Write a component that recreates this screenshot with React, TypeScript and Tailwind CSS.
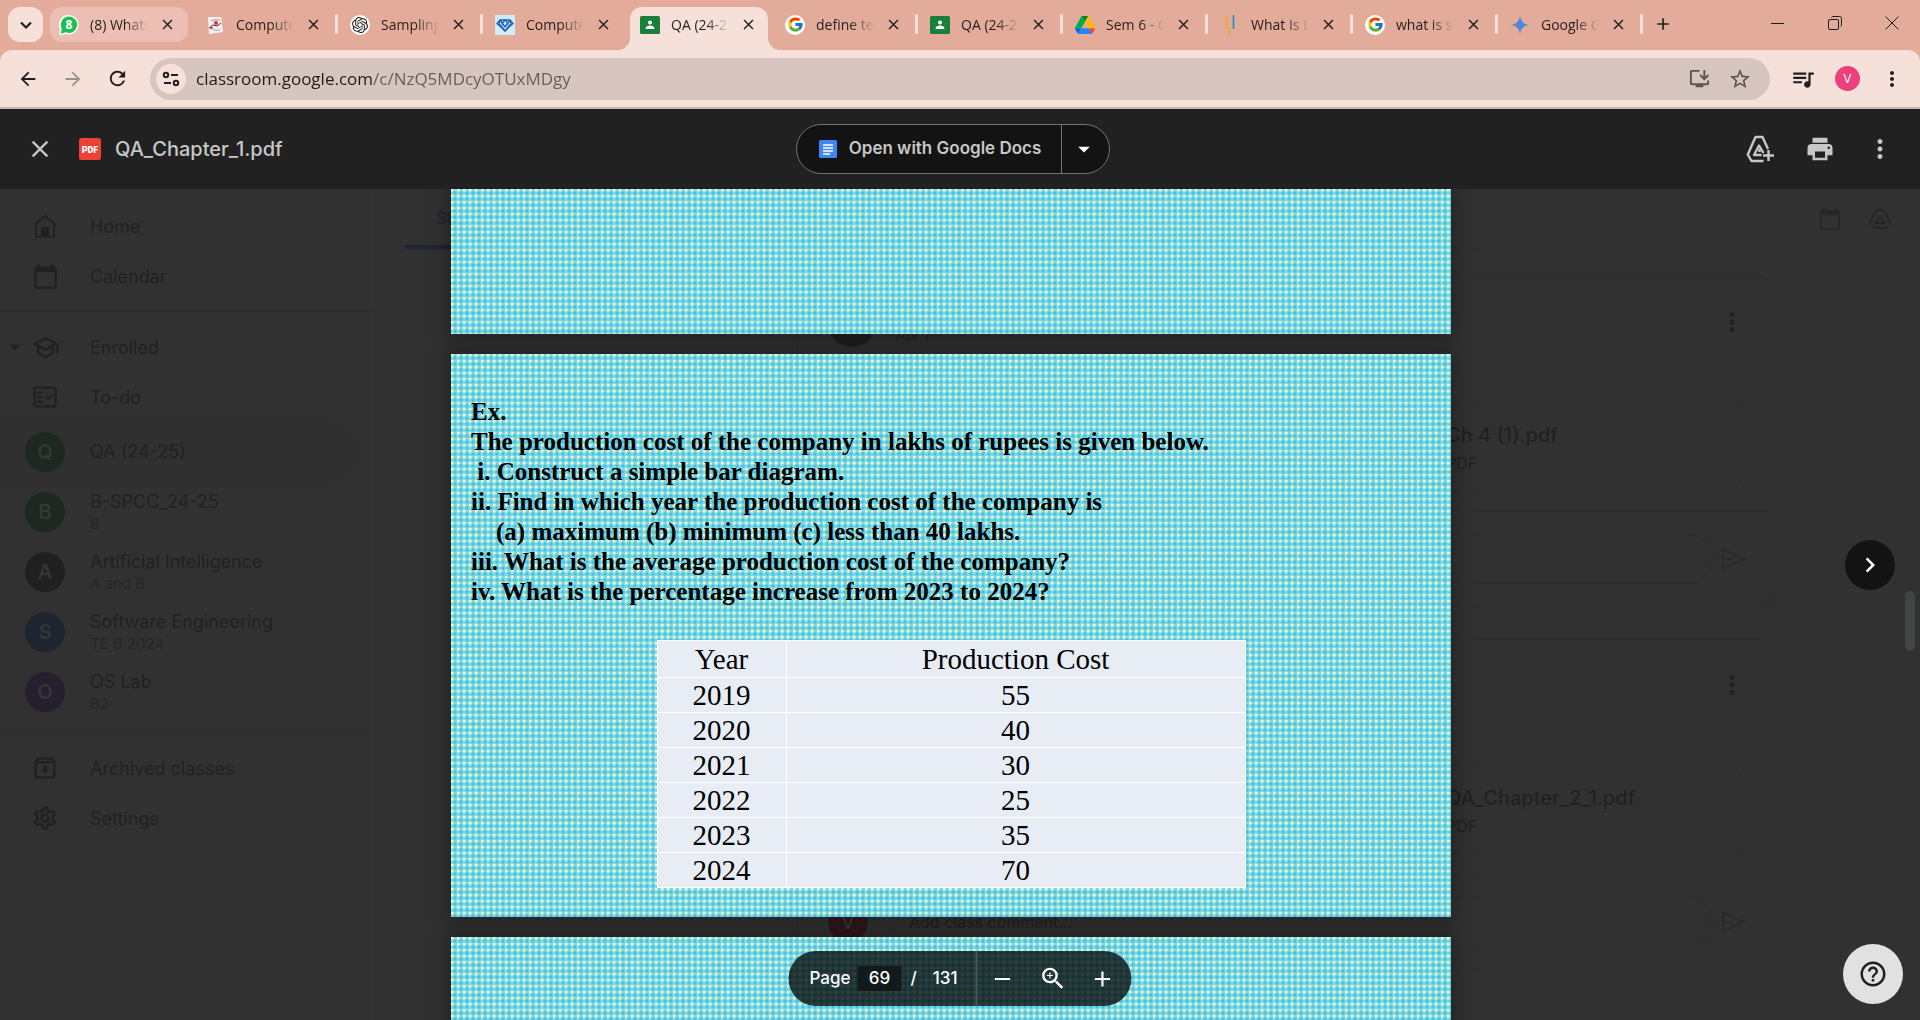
import type { ReactNode } from "react";
import {
  MdAdd,
  MdArrowBack,
  MdArrowDropDown,
  MdArrowForward,
  MdCalendarToday,
  MdChevronRight,
  MdClose,
  MdHelpOutline,
  MdMoreVert,
  MdOutlineArchive,
  MdOutlineFactCheck,
  MdOutlineInstallDesktop,
  MdOutlineSchool,
  MdOutlineSettings,
  MdPrint,
  MdQueueMusic,
  MdRefresh,
  MdRemove,
  MdStarBorder,
  MdZoomIn,
} from "react-icons/md";
import { FcGoogle } from "react-icons/fc";
import { SiOpenai } from "react-icons/si";

const paper =
  "bg-[#7fd9de] bg-[image:radial-gradient(circle_at_1px_1px,#f4fbd2_1px,transparent_2px),radial-gradient(circle_at_4px_4px,#3fc0ee_1px,transparent_2px)] bg-[size:6px_6px] shadow-[0_0_20px_4px_rgba(0,0,0,0.3)]";

/* ---------- favicons ---------- */

function WhatsAppIcon() {
  return (
    <svg viewBox="0 0 20 24" className="h-6 w-5" aria-hidden="true">
      <path d="M10 2a9.6 9.6 0 0 0-9 14L.4 22.500 7 21a9.700 9.700 0 1 0 3-19z" fill="#fff" />
      <path d="M10 3.500a8.200 8.200 0 0 0-7.300 12L1.900 20.800l5-1.500A8.200 8.200 0 1 0 10 3.500z" fill="#1fbf55" />
      <text x="10" y="16" textAnchor="middle" fontSize="12" fontWeight="700" fill="#fff" fontFamily="Open Sans, sans-serif">8</text>
    </svg>
  );
}

function BookIcon() {
  return (
    <svg viewBox="0 0 20 20" className="size-5" aria-hidden="true">
      <path d="M2 3l14-2 2 16-14 2z" fill="#e9a9a4" />
      <path d="M3 2h13l2 15-14 2z" fill="#f5f1f1" />
      <path d="M6 6l4-1.500 5 .5" stroke="#b8b5b8" strokeWidth="1.500" fill="none" />
      <circle cx="11" cy="8" r="2" fill="#e02f32" />
      <path d="M4 13l4-3 4 1 4-3" stroke="#3c3c48" strokeWidth="1" fill="none" />
      <circle cx="6.500" cy="13" r="1.300" fill="#e02f32" />
      <path d="M8 15h7" stroke="#a9a5a8" />
    </svg>
  );
}

function ChatIcon() {
  return (
    <span className="flex size-5 items-center justify-center rounded-full bg-white text-[#222]">
      <SiOpenai size={16} />
    </span>
  );
}

function DiamondIcon() {
  return (
    <svg viewBox="0 0 20 20" className="size-5" aria-hidden="true">
      <path d="M0 0h20v20H0z" fill="#d3ebf5" />
      <g fill="none" stroke="#1c62b8" strokeWidth="1.300" strokeLinejoin="round">
        <path d="M5 5h10l3 3.500-8 7.500-8-7.500z" />
        <path d="M5 5l-1 3.500 6 7.500 6-7.500L15 5M5 5l5 7 5-7M7 8.500l3-3.500 3 3.500-3 3.500z" />
      </g>
    </svg>
  );
}

function ClassroomIcon() {
  return (
    <svg viewBox="0 0 20 20" className="size-5" aria-hidden="true">
      <rect y="1" width="20" height="18" rx="1.500" fill="#1b7c3c" />
      <rect x="1.500" y="2.500" width="17" height="15" fill="#188038" />
      <circle cx="10" cy="7.500" r="2" fill="#fff" />
      <path d="M5.500 14c0-2.500 2.500-3.500 4.500-3.500s4.500 1 4.500 3.500z" fill="#fff" />
    </svg>
  );
}

function GoogleIcon() {
  return (
    <span className="flex size-5 items-center justify-center rounded-full bg-white">
      <FcGoogle size={17} />
    </span>
  );
}

function DriveIcon() {
  return (
    <svg viewBox="0 0 87.300 78" className="h-5 w-5" aria-hidden="true">
      <path d="m6.600 66.850 3.850 6.650c.8 1.400 1.950 2.500 3.300 3.300l13.750-23.800h-27.500c0 1.550.4 3.100 1.200 4.500z" fill="#0066da" />
      <path d="m43.650 25-13.750-23.800c-1.350.8-2.500 1.900-3.300 3.300l-25.400 44a9.060 9.060 0 0 0-1.200 4.500h27.500z" fill="#00ac47" />
      <path d="m73.550 76.800c1.350-.8 2.500-1.900 3.300-3.300l1.600-2.750 7.650-13.250c.8-1.400 1.200-2.950 1.200-4.500h-27.502l5.852 11.500z" fill="#ea4335" />
      <path d="m43.650 25 13.750-23.800c-1.350-.8-2.900-1.200-4.500-1.200h-18.500c-1.600 0-3.150.45-4.500 1.200z" fill="#00832d" />
      <path d="m59.800 53h-32.300l-13.750 23.800c1.350.8 2.900 1.200 4.500 1.200h50.800c1.600 0 3.150-.45 4.500-1.200z" fill="#2684fc" />
      <path d="m73.400 26.500-12.700-22c-.8-1.400-1.950-2.500-3.300-3.300l-13.750 23.800 16.150 28h27.450c0-1.550-.4-3.100-1.200-4.500z" fill="#ffba00" />
    </svg>
  );
}

function BarsIcon() {
  return (
    <svg viewBox="0 0 20 20" className="size-5" aria-hidden="true">
      <path d="M6.500 0v14M9.500 12v8" stroke="#f2a33a" strokeWidth="1.500" />
      <path d="M9.500 4v6" stroke="#eaa968" strokeWidth="1" />
      <path d="M13.500 0v14" stroke="#1593c9" strokeWidth="1.600" />
    </svg>
  );
}

function GeminiIcon() {
  return (
    <svg viewBox="0 0 20 20" className="size-5" aria-hidden="true">
      <defs>
        <linearGradient id="gem" x1="0" x2="1" y1="0" y2="0">
          <stop offset="0" stopColor="#b06a96" />
          <stop offset="0.500" stopColor="#4d86e0" />
          <stop offset="1" stopColor="#2a9fe0" />
        </linearGradient>
      </defs>
      <path d="M10 1c.8 5 3.500 8.200 9 9-5.500.8-8.200 4-9 9-.8-5-3.500-8.200-9-9 5.500-.8 8.200-4 9-9z" fill="url(#gem)" />
    </svg>
  );
}

/* ---------- outline icons ---------- */

function HomeIcon() {
  return (
    <svg viewBox="0 0 26 26" className="size-[26px]" aria-hidden="true">
      <path d="M4 23.500V10.500L13 3l9 7.500v13z" fill="none" stroke="currentColor" strokeWidth="2" />
      <path d="M9 14h8v9H9z" fill="currentColor" />
    </svg>
  );
}

function SendIcon() {
  return (
    <svg viewBox="0 0 26 24" className="ml-2 h-6 w-[26px] text-[#2a2a2a]" fill="none" stroke="currentColor" strokeWidth="2" aria-hidden="true">
      <path d="M2 2.500L23 12 2 21.500zM2 12h10" />
    </svg>
  );
}

function DriveOutline() {
  return (
    <svg viewBox="0 0 24 24" className="size-6" fill="none" stroke="currentColor" strokeWidth="2" strokeLinejoin="round" aria-hidden="true">
      <path d="M8.500 3h7L22 14.500 18.500 21h-13L2 14.500z" />
      <path d="M12 9l4.500 7h-9z" />
    </svg>
  );
}

function DriveAdd() {
  return (
    <svg viewBox="0 0 28 30" className="h-[30px] w-7" fill="none" stroke="currentColor" strokeWidth="2.400" strokeLinejoin="round" aria-hidden="true">
      <path d="M17.500 27H5.500L1.800 20.500 9.500 3h7l5.500 12" />
      <path d="M17.500 19L13 11.500 8 21h7.500M13.500 15v3" />
      <path d="M22.500 16v11M17 21.500h11" />
    </svg>
  );
}

/* ---------- browser chrome ---------- */

type Tab = { title: string; icon: ReactNode; state?: "hover" | "active"; rule?: boolean };

const tabs: Tab[] = [
  { title: "(8) WhatsApp", icon: <WhatsAppIcon />, state: "hover" },
  { title: "Computer", icon: <BookIcon />, rule: true },
  { title: "Sampling", icon: <ChatIcon />, rule: true },
  { title: "Computer", icon: <DiamondIcon /> },
  { title: "QA (24-25)", icon: <ClassroomIcon />, state: "active" },
  { title: "define term", icon: <GoogleIcon />, rule: true },
  { title: "QA (24-25)", icon: <ClassroomIcon />, rule: true },
  { title: "Sem 6 - Goo", icon: <DriveIcon />, rule: true },
  { title: "What Is Data", icon: <BarsIcon />, rule: true },
  { title: "what is sam", icon: <GoogleIcon />, rule: true },
  { title: "Google Gemini", icon: <GeminiIcon />, rule: true },
];

function TabItem({ tab }: { tab: Tab }) {
  const active = tab.state === "active";
  return (
    <div className="flex w-[145px] min-w-0 items-start">
      <div
        className={
          active
            ? "relative flex h-[43px] min-w-0 flex-1 items-start rounded-t-xl bg-[#f5e1da] pl-[10px]"
            : tab.state === "hover"
              ? "flex h-[35px] min-w-0 flex-1 rounded-xl bg-[#ebbfb3] pl-[9px]"
              : "flex h-[35px] min-w-0 flex-1 pl-[10px]"
        }
      >
        {active && (
          <>
            <span className="absolute bottom-0 -left-3 size-3 bg-[radial-gradient(circle_at_0_0,transparent_12px,#f5e1da_12px)]" />
            <span className="absolute -right-3 bottom-0 size-3 bg-[radial-gradient(circle_at_100%_0,transparent_12px,#f5e1da_12px)]" />
          </>
        )}
        <div className="flex h-[35px] min-w-0 flex-1 items-center">
          <span className="flex w-5 shrink-0 justify-center">{tab.icon}</span>
          <span className="ml-[11px] w-[58px] overflow-hidden text-sm leading-5 whitespace-nowrap text-[#2b211f] [mask-image:linear-gradient(90deg,#000_60%,transparent)]">
            {tab.title}
          </span>
          <button aria-label={"Close " + tab.title} className="ml-[10px] flex size-[18px] items-center justify-center text-[#1f1f1f]">
            <MdClose size={17} />
          </button>
        </div>
      </div>
      <span className={tab.rule ? "mx-[2px] mt-[7px] h-5 w-[3px] rounded-full bg-[#f5e1da]" : "mx-[2px] w-[3px]"} />
    </div>
  );
}

function TabStrip() {
  return (
    <div className="flex h-[50px] shrink-0 items-start bg-[#e3ab9a] pt-[7px] pl-2">
      <button aria-label="Search tabs" className="flex h-[35px] w-[35px] shrink-0 items-center justify-center rounded-xl bg-[#f5e1da] text-[#1f1f1f]">
        <svg viewBox="0 0 14 14" className="size-3.5" fill="none" stroke="currentColor" strokeWidth="2.200" aria-hidden="true">
          <path d="M2 4.500l5 5 5-5" />
        </svg>
      </button>
      <div className="ml-[7px] flex min-w-0">
        {tabs.map((t, i) => (
          <TabItem key={i} tab={t} />
        ))}
      </div>
      <button aria-label="New tab" className="ml-px flex size-[34px] items-center justify-center text-[#1f1f1f]">
        <MdAdd size={20} />
      </button>
      <div className="ml-auto flex text-[#1f1f1f]">
        <button aria-label="Minimize" className="flex h-8 w-[57px] items-center justify-center">
          <span className="h-px w-[13px] bg-current" />
        </button>
        <button aria-label="Restore" className="flex h-8 w-[57px] items-center justify-center">
          <svg viewBox="0 0 14 14" className="size-3.5" fill="none" stroke="currentColor" aria-hidden="true">
            <rect x="0.500" y="3.500" width="10" height="10" rx="1.500" />
            <path d="M3.500 1.500Q4 .5 5 .5h6.500a2 2 0 0 1 2 2V9q0 1-1 1.500" />
          </svg>
        </button>
        <button aria-label="Close window" className="flex h-8 w-[57px] items-center justify-center">
          <svg viewBox="0 0 14 14" className="size-3.5" stroke="currentColor" aria-hidden="true">
            <path d="M.5.500l13 13M13.500.500l-13 13" />
          </svg>
        </button>
      </div>
    </div>
  );
}

function Toolbar() {
  return (
    <div className="shrink-0 bg-[#e3ab9a]">
      <div className="flex h-[59px] items-center rounded-t-xl border-b-2 border-[#c9b6b0] bg-[#f5e1da] pl-[5px] text-[#1f1f1f]">
        <button aria-label="Back" className="flex w-[45px] justify-center"><MdArrowBack size={22} /></button>
        <button aria-label="Forward" className="flex w-[45px] justify-center text-[#9b8f8b]"><MdArrowForward size={22} /></button>
        <button aria-label="Reload" className="flex w-[45px] justify-center"><MdRefresh size={23} /></button>
        <div className="ml-[10px] flex h-[42px] min-w-0 flex-1 items-center rounded-full bg-[#d6c6bf] pr-[18px] pl-[6px]">
          <button aria-label="View site information" className="flex size-[30px] shrink-0 items-center justify-center rounded-full bg-[#f5e1da]">
            <svg viewBox="0 0 18 18" className="size-[18px]" fill="none" stroke="currentColor" strokeWidth="2" aria-hidden="true">
              <circle cx="4" cy="5" r="2.200" />
              <path d="M9 5h7M2 13h7" />
              <circle cx="14" cy="13" r="2.200" />
            </svg>
          </button>
          <input
            aria-label="Address"
            defaultValue="classroom.google.com/c/NzQ5MDcyOTUxMDgy"
            className="ml-[10px] min-w-0 flex-1 bg-[linear-gradient(90deg,#211c1b_176px,#665c59_176px)] bg-clip-text text-[17px] leading-6 text-transparent outline-none"
          />
          <button aria-label="Install app" className="mr-[17px] text-[#5c5450]"><MdOutlineInstallDesktop size={23} /></button>
          <button aria-label="Bookmark" className="text-[#5c5450]"><MdStarBorder size={24} /></button>
        </div>
        <button aria-label="Media controls" className="ml-[18px] flex w-[30px] justify-center"><MdQueueMusic size={26} /></button>
        <button aria-label="Profile" className="ml-[17px] flex size-[25px] items-center justify-center rounded-full bg-[#ec3f7b] text-[13px] text-white">V</button>
        <button aria-label="Browser menu" className="ml-5 flex w-6 justify-center"><MdMoreVert size={26} /></button>
        <span className="w-4" />
      </div>
    </div>
  );
}

/* ---------- viewer header ---------- */

function ViewerHeader() {
  return (
    <header className="grid h-20 shrink-0 grid-cols-[1fr_auto_1fr] items-center bg-[#212121] pr-[14px] text-[#c7c7c7]">
      <div className="flex items-center pl-[25px]">
        <button aria-label="Close viewer" className="flex size-[30px] items-center justify-center"><MdClose size={28} /></button>
        <svg viewBox="0 0 22 22" className="ml-6 size-[22px]" aria-hidden="true">
          <rect width="22" height="22" rx="2.500" fill="#ea4335" />
          <text x="11" y="14.500" textAnchor="middle" fontSize="9" fontWeight="900" fill="#fff" fontFamily="Roboto, sans-serif">PDF</text>
        </svg>
        <h1 className="ml-[14px] text-xl font-medium">QA_Chapter_1.pdf</h1>
      </div>
      <div className="flex h-[50px] rounded-full border border-[#747474] bg-[#131313]">
        <button className="flex items-center pr-5 pl-[22px] text-[17px] font-semibold">
          <svg viewBox="0 0 18 18" className="mr-3 size-[18px]" aria-hidden="true">
            <rect width="18" height="18" rx="1.500" fill="#4285f4" />
            <path d="M4 5h10M4 8h10M4 11h10M4 14h7" stroke="#fff" strokeWidth="1.600" />
          </svg>
          Open with Google Docs
        </button>
        <button aria-label="More apps" className="flex w-12 items-center justify-center border-l border-[#747474] pr-1 text-white">
          <MdArrowDropDown size={28} />
        </button>
      </div>
      <div className="flex items-center justify-end gap-2">
        <button aria-label="Add to Drive" className="flex w-[52px] justify-center"><DriveAdd /></button>
        <button aria-label="Print" className="flex w-[52px] justify-center"><MdPrint size={30} /></button>
        <button aria-label="More actions" className="flex w-[52px] justify-center"><MdMoreVert size={30} /></button>
      </div>
    </header>
  );
}

/* ---------- dimmed classroom page ---------- */

function NavItem({ icon, label, arrow }: { icon: ReactNode; label: string; arrow?: boolean }) {
  return (
    <a href="#" className="flex h-[50px] items-center">
      <span className="flex w-[30px] justify-center">{arrow && <MdArrowDropDown size={26} />}</span>
      <span className="flex w-[30px] justify-center">{icon}</span>
      <span className="ml-[30px] text-[18px]">{label}</span>
    </a>
  );
}

const classes = [
  { letter: "Q", name: "QA (24-25)", section: "", color: "bg-[#1d2822]", row: "rounded-r-full bg-[#303030]" },
  { letter: "B", name: "B-SPCC_24-25", section: "B", color: "bg-[#1d2822]", row: "" },
  { letter: "A", name: "Artificial Intelligence", section: "A and B", color: "bg-[#202020]", row: "" },
  { letter: "S", name: "Software Engineering", section: "TE B 2024", color: "bg-[#1e2530]", row: "" },
  { letter: "O", name: "OS Lab", section: "B2", color: "bg-[#261f2d]", row: "" },
];

function Sidebar() {
  return (
    <nav className="w-[376px] shrink-0 border-r border-[#2e2e2e] pt-3 text-[#212121]">
      <NavItem icon={<HomeIcon />} label="Home" />
      <NavItem icon={<MdCalendarToday size={27} />} label="Calendar" />
      <div className="my-[10px] h-px bg-[#2e2e2e]" />
      <NavItem icon={<MdOutlineSchool size={29} />} label="Enrolled" arrow />
      <NavItem icon={<MdOutlineFactCheck size={28} />} label="To-do" />
      {classes.map((c) => (
        <a href="#" key={c.name} className={"mr-4 flex h-[60px] items-center pl-[25px] " + c.row}>
          <span className={"flex size-10 items-center justify-center rounded-full text-xl font-semibold text-[#343634] " + c.color}>{c.letter}</span>
          <span className="ml-[25px] flex flex-col">
            <span className="text-[18px] leading-6">{c.name}</span>
            {c.section && <span className="text-[15px] leading-5 text-[#262626]">{c.section}</span>}
          </span>
        </a>
      ))}
      <div className="my-[10px] h-px bg-[#2e2e2e]" />
      <NavItem icon={<MdOutlineArchive size={28} />} label="Archived classes" />
      <NavItem icon={<MdOutlineSettings size={28} />} label="Settings" />
    </nav>
  );
}

function Post({ date, file, comment }: { date?: string; file: string; comment?: boolean }) {
  return (
    <article className="mb-8 rounded-xl border border-[#2e2e2e]">
      <div className="flex h-[125px] items-start pt-[22px] pr-6 pl-[30px]">
        <span className="size-12 rounded-full bg-[#201f1f]" />
        {date && <span className="mt-6 ml-5 text-sm leading-6">{date}</span>}
        <MdMoreVert size={30} className="mt-2 ml-auto" />
      </div>
      <div className="mr-[30px] ml-auto flex h-[89px] w-[424px] rounded-xl border border-[#2e2e2e]">
        <span className="w-[104px] border-r border-[#2e2e2e]" />
        <span className="ml-6 flex flex-col justify-center pt-1">
          <span className="text-xl leading-7 font-medium">{file}</span>
          <span className="text-base leading-7">PDF</span>
        </span>
      </div>
      <div className="mt-5 flex h-[95px] items-center border-t border-[#2e2e2e] pr-[24px] pl-[30px]">
        {comment && (
          <span className="flex size-10 items-center justify-center rounded-full bg-[#30181e] text-xl text-[#3c3c3c]">V</span>
        )}
        <label className="ml-5 flex h-[50px] flex-1 items-center rounded-full border border-[#2e2e2e] px-5">
          <input
            aria-label="Class comment"
            placeholder={comment ? "Add class comment…" : undefined}
            className="w-full bg-transparent text-base placeholder:text-[#202020]"
          />
        </label>
        <SendIcon />
      </div>
    </article>
  );
}

function Classroom() {
  return (
    <div className="flex h-full text-[#212121]">
      <Sidebar />
      <main className="min-w-0 flex-1">
        <div className="flex h-[61px] items-stretch border-b border-[#2e2e2e] pr-[28px] pl-[29px]">
          <a href="#" className="flex items-center rounded-t border-b-4 border-[#1e2430] px-[31px] pt-1 text-[17px] text-[#1e2430]">Stream</a>
          <span className="ml-auto flex items-center gap-[26px] text-[#252727]">
            <MdCalendarToday size={24} />
            <DriveOutline />
          </span>
        </div>
        <div className="mt-[26px] mr-[148px] ml-[421px]">
          <Post date="Apr 7" file="Ch 4 (1).pdf" />
          <Post file="QA_Chapter_2_1.pdf" comment />
        </div>
      </main>
    </div>
  );
}

/* ---------- document ---------- */

const question = [
  "Ex.",
  "The production cost of the company in lakhs of rupees is given below.",
  " i. Construct a simple bar diagram.",
  "ii. Find in which year the production cost of the company is",
  "    (a) maximum (b) minimum (c) less than 40 lakhs.",
  "iii. What is the average production cost of the company?",
  "iv. What is the percentage increase from 2023 to 2024?",
];

const rows = [
  ["2019", "55"],
  ["2020", "40"],
  ["2021", "30"],
  ["2022", "25"],
  ["2023", "35"],
  ["2024", "70"],
];

function Document() {
  return (
    <div className="mx-auto flex w-[1000px] max-w-full flex-col gap-5">
      <section aria-label="Page 68" className={"h-[145px] " + paper} />
      <section
        aria-label="Page 69"
        className={"px-5 pt-[43px] pb-[29px] font-['Liberation_Serif',serif] text-black " + paper}
      >
        {question.map((q) => (
          <p key={q} className="text-[25px] leading-[30px] font-bold whitespace-pre">{q}</p>
        ))}
        <table className="mx-auto mt-[33px] w-[589px] border-collapse bg-[#e8edf5] text-center text-[29px] leading-[34px]">
          <thead>
            <tr>
              <th scope="col" className="w-[129px] border border-white p-0 leading-9 font-normal">Year</th>
              <th scope="col" className="border border-white p-0 leading-9 font-normal">Production Cost</th>
            </tr>
          </thead>
          <tbody>
            {rows.map(([y, c]) => (
              <tr key={y}>
                <td className="border border-white p-0">{y}</td>
                <td className="border border-white p-0">{c}</td>
              </tr>
            ))}
          </tbody>
        </table>
      </section>
      <section aria-label="Page 70" className={"h-[563px] shrink-0 " + paper} />
    </div>
  );
}

function Pager() {
  return (
    <div className="absolute bottom-[14px] left-1/2 flex h-[55px] -translate-x-1/2 items-center rounded-full bg-black/75 pl-[21px] text-[17px] font-medium text-white">
      <label htmlFor="page">Page</label>
      <input id="page" defaultValue="69" className="ml-[7px] h-[25px] w-11 bg-[#131a1b] text-center outline-none" />
      <span className="ml-[9px]">/</span>
      <span className="mr-[18px] ml-4">131</span>
      <span className="h-full w-0.5 bg-[#48595b]" />
      <button aria-label="Zoom out" className="flex w-[50px] justify-center"><MdRemove size={26} /></button>
      <button aria-label="Fit to width" className="flex w-[50px] justify-center"><MdZoomIn size={29} /></button>
      <button aria-label="Zoom in" className="mr-1 flex w-[50px] justify-center"><MdAdd size={26} /></button>
    </div>
  );
}

export default function App() {
  return (
    <div className="flex h-screen flex-col overflow-hidden bg-[#313131] font-['Open_Sans','Noto_Sans',sans-serif]">
      <TabStrip />
      <Toolbar />
      <div className="flex min-h-0 flex-1 flex-col font-[Inter,Roboto,sans-serif]">
        <ViewerHeader />
        <div className="relative min-h-0 flex-1 overflow-hidden">
          <Classroom />
          <div className="absolute inset-0 overflow-hidden pr-[18px]">
            <Document />
          </div>
          <span className="absolute top-[402px] right-[5px] h-[60px] w-[10px] rounded-full bg-[#434545]" />
          <button aria-label="Next" className="absolute top-[351px] right-[25px] flex size-[50px] items-center justify-center rounded-full bg-[#131313] text-white">
            <MdChevronRight size={30} />
          </button>
          <Pager />
          <button aria-label="Help" className="absolute right-[17px] bottom-4 flex size-[60px] items-center justify-center rounded-full bg-[#e1e1e1] text-[#1f1f1f]">
            <MdHelpOutline size={30} />
          </button>
        </div>
      </div>
    </div>
  );
}
